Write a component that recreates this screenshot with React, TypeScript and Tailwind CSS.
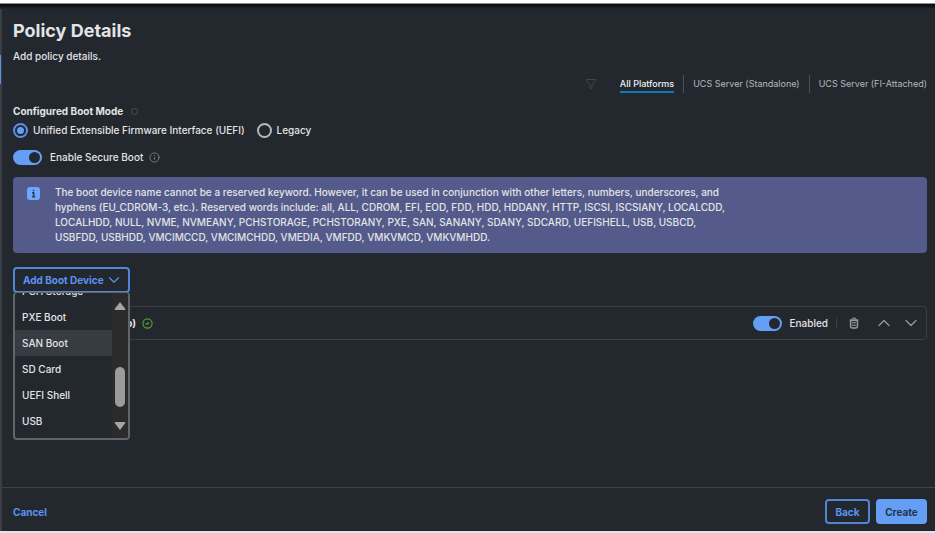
import { useState } from "react";
import { ChevronDown, ChevronUp, CircleCheck, Filter, Info } from "lucide-react";

const platforms = ["All Platforms", "UCS Server (Standalone)", "UCS Server (FI-Attached)"];

const devices = ["PCH Storage", "PXE Boot", "SAN Boot", "SD Card", "UEFI Shell", "USB"];

function Toggle({ label }: { label: string }) {
  const [on, setOn] = useState(true);

  return (
    <label className="flex items-center gap-2">
      <input
        type="checkbox"
        role="switch"
        checked={on}
        onChange={() => setOn(!on)}
        className="flex h-[15px] w-[29px] appearance-none items-center rounded-full bg-[#649ef5] px-0.5 before:size-[11px] before:rounded-full before:bg-[#23282e] checked:justify-end not-checked:bg-[#6f757d]"
      />
      <span>{label}</span>
    </label>
  );
}

function Radio({ label, defaultChecked }: { label: string; defaultChecked?: boolean }) {
  return (
    <label className="flex items-center gap-[5px]">
      <input
        type="radio"
        name="boot-mode"
        defaultChecked={defaultChecked}
        className="flex size-[15px] appearance-none items-center justify-center rounded-full border-2 border-[#b4b8bd] before:size-[7px] before:rounded-full checked:border-[#5a8fe6] checked:before:bg-[#649ef5]"
      />
      <span>{label}</span>
    </label>
  );
}

function TrashIcon() {
  return (
    <svg viewBox="0 0 10 12" className="h-3 w-2.5" fill="none" stroke="currentColor">
      <path d="M3.200 2.400Q3.200 1 5 1t1.800 1.400" strokeWidth="1.200" />
      <path d="M.8 3.200h8.400" strokeWidth="1.800" />
      <path d="M1.600 3.500v6.100q0 1.400 1.400 1.400h4q1.400 0 1.400-1.400V3.500" strokeWidth="1.500" />
      <path d="M3 5.800h4M3 8.200h4" strokeWidth="1.100" />
    </svg>
  );
}

function DeviceMenu() {
  return (
    <div className="absolute top-full left-0 z-10 -mt-px flex h-[148px] w-full overflow-hidden rounded-[4px] border-2 border-t border-[#60656c] bg-[#23282e]">
      {/* Scrolled down to the end of the list */}
      <ul className="flex flex-1 flex-col justify-end overflow-hidden pb-1">
        {devices.map((device) => (
          <li key={device} className="shrink-0">
            <button
              className={`block h-[26px] w-full pl-[7px] text-left ${device === "SAN Boot" ? "bg-[#373c42]" : ""}`}
            >
              {device}
            </button>
          </li>
        ))}
      </ul>
      <div className="flex w-4 flex-col items-center bg-[#2b2b2b] pt-[9px] pb-2">
        <svg viewBox="0 0 12 8" className="h-2 w-3" fill="#a5a5a5">
          <path d="M6 0 11.3 7q.4 1-.8 1h-9Q.3 8 .7 7Z" />
        </svg>
        <div className="mt-[57px] mb-auto h-10 w-2.5 rounded-full bg-[#9b9b9b]" />
        <svg viewBox="0 0 12 8" className="h-2 w-3" fill="#a5a5a5">
          <path d="M6 8 .7 1Q.3 0 1.500 0h9q1.200 0 .8 1Z" />
        </svg>
      </div>
    </div>
  );
}

export default function App() {
  const [platform, setPlatform] = useState("All Platforms");

  return (
    <div className="flex min-h-screen flex-col border-t-[3px] border-b-2 border-t-white border-b-[#e4e4e4] bg-[#23282e] font-['Inter',sans-serif] text-[10px] leading-4 font-medium text-[#e2e4e6]">
      <div className="h-1.5 border-t border-[#8a8d8d] bg-linear-to-b from-[#050808] to-[#23282e]" />
      <div className="flex flex-1">
        {/* Step rail */}
        <div className="w-0.5 bg-[#3a3f46] pt-[46px]">
          <div className="h-[29px] w-px bg-[#5a8fe6]" />
        </div>

        <div className="flex flex-1 flex-col">
          <main className="flex-1 pr-2 pl-[11px]">
            <h1 className="pt-2.5 text-[18px] leading-6 font-bold">Policy Details</h1>
            <p className="mt-[5px]">Add policy details.</p>

            <div className="mt-[11px] flex items-center justify-end text-[9px]">
              <button aria-label="Filter" className="mr-[23px] text-[#42474e]">
                <Filter className="size-3" strokeWidth={2} />
              </button>
              <nav className="flex divide-x divide-[#4a4f56]">
                {platforms.map((name) => (
                  <button
                    key={name}
                    onClick={() => setPlatform(name)}
                    className="group px-[9px] first:pl-0 last:pr-0"
                    aria-current={name === platform}
                  >
                    <span className="block border-y-2 border-transparent leading-[14px] font-normal text-[#b4b8bd] group-aria-[current=true]:border-b-[#0e7ab8] group-aria-[current=true]:font-medium group-aria-[current=true]:text-[#f0f1f2]">
                      {name}
                    </span>
                  </button>
                ))}
              </nav>
            </div>

            <fieldset className="mt-2.5">
              <legend className="flex items-center gap-2 font-bold">
                Configured Boot Mode
                <span className="size-[7px] rounded-full border border-[#4a4f56]" />
              </legend>
              <div className="mt-[3px] flex gap-3">
                <Radio label="Unified Extensible Firmware Interface (UEFI)" defaultChecked />
                <Radio label="Legacy" />
              </div>
            </fieldset>

            <div className="mt-[11px] flex items-center gap-1.5">
              <Toggle label="Enable Secure Boot" />
              <Info className="size-[11px] text-[#7b8087]" />
            </div>

            <div className="mt-3 flex items-start gap-[15px] rounded-[4px] bg-[#545b8a] px-3.5 py-2">
              <svg viewBox="0 0 13 13" className="mt-0.5 size-[13px] shrink-0">
                <rect width="13" height="13" rx="3" fill="#70a6fb" />
                <path d="M6.500 2.700v1.600M5 5.800h1.700v3.700M5 9.800h3.200" fill="none" stroke="#30395f" strokeWidth="1.500" />
              </svg>
              <p className="max-w-[676px] leading-[15px]">
                The boot device name cannot be a reserved keyword. However, it can be used in conjunction with other
                letters, numbers, underscores, and hyphens (EU_CDROM-3, etc.). Reserved words include: all, ALL, CDROM,
                EFI, EOD, FDD, HDD, HDDANY, HTTP, ISCSI, ISCSIANY, LOCALCDD, LOCALHDD, NULL, NVME, NVMEANY, PCHSTORAGE,
                PCHSTORANY, PXE, SAN, SANANY, SDANY, SDCARD, UEFISHELL, USB, USBCD, USBFDD, USBHDD, VMCIMCCD,
                VMCIMCHDD, VMEDIA, VMFDD, VMKVMCD, VMKVMHDD.
              </p>
            </div>

            <div className="relative mt-3.5 w-[117px]">
              <button className="flex h-[26px] w-full items-center gap-px rounded-[4px] border-2 border-[#5085d8] pl-2 font-bold whitespace-nowrap text-[#5b93f5]">
                Add Boot Device
                <ChevronDown className="size-[18px] shrink-0" strokeWidth={1.5} />
              </button>
              <DeviceMenu />
            </div>

            <div className="mt-[13px] flex h-[34px] items-center rounded-[4px] border border-[#3a3f46] pr-[5px]">
              <span className="w-[122px] text-right font-bold">o)</span>
              <CircleCheck className="ml-1.5 size-[11px] text-[#54a135]" strokeWidth={2.5} />
              <div className="ml-auto">
                <Toggle label="Enabled" />
              </div>
              <div className="ml-2 h-3 w-px bg-[#3a3f46]" />
              <div className="ml-3 flex items-center gap-[7px] text-[#969a9f]">
                <button aria-label="Delete" className="mr-2">
                  <TrashIcon />
                </button>
                <button aria-label="Move up">
                  <ChevronUp className="size-5" strokeWidth={1.5} />
                </button>
                <button aria-label="Move down">
                  <ChevronDown className="size-5" strokeWidth={1.5} />
                </button>
              </div>
            </div>
          </main>

          <footer className="flex items-center gap-1.5 border-t border-[#3f444b] pt-[11px] pr-2 pb-[7px] pl-[11px] font-bold">
            <button className="mr-auto text-[#5b93f5]">Cancel</button>
            <button className="h-[25px] w-[45px] rounded-[4px] border-2 border-[#5085d8] text-[#5b93f5]">Back</button>
            <button className="h-[25px] w-[51px] rounded-[4px] bg-[#649ef5] text-[#23344f]">Create</button>
          </footer>
        </div>
      </div>
    </div>
  );
}
